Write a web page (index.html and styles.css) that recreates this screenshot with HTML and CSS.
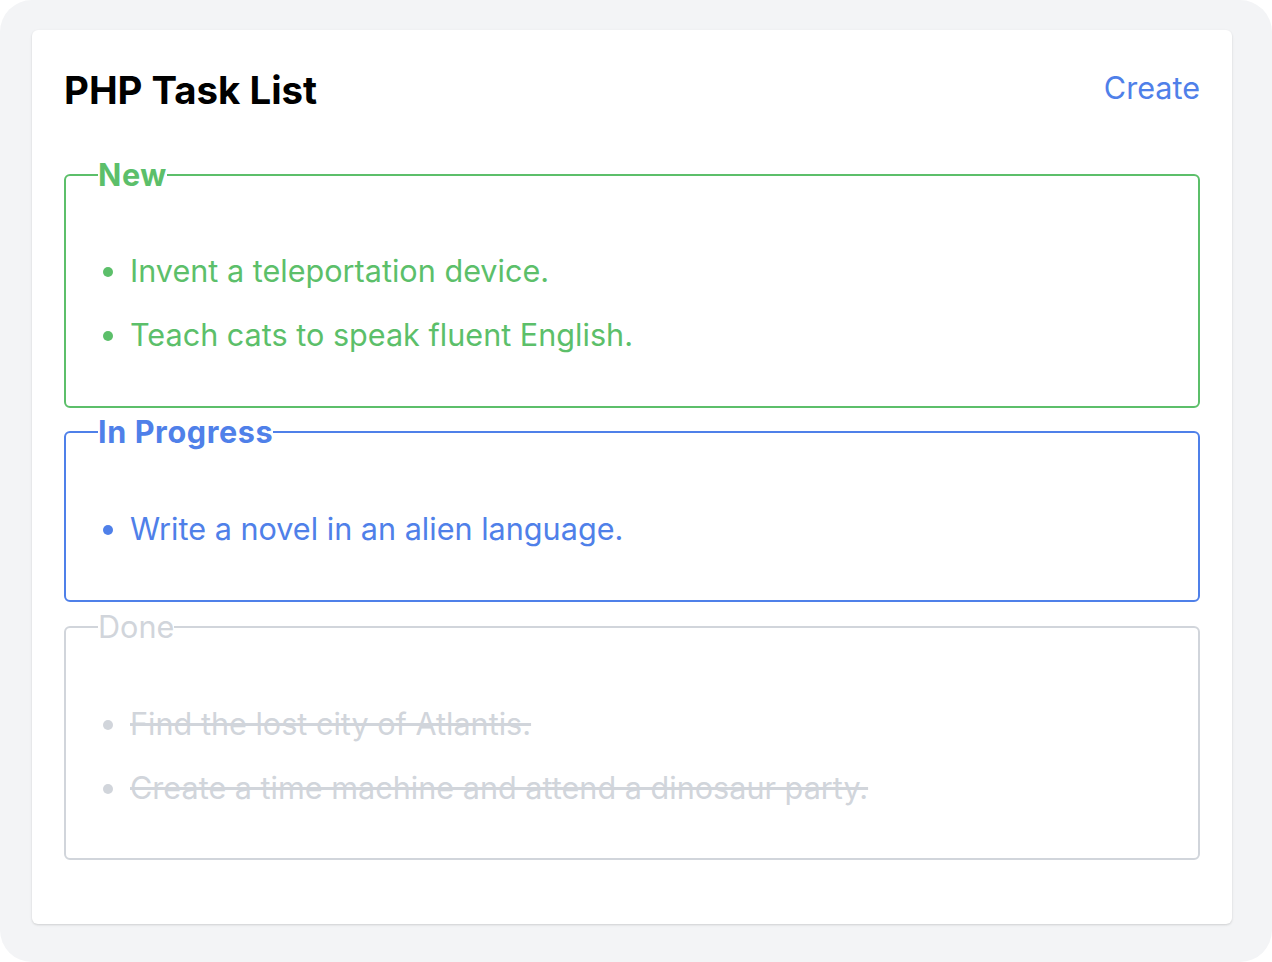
FILE: index.html
```html
<!DOCTYPE html>
<html lang="en">
<head>
<meta charset="utf-8">
<title>PHP Task List</title>
<link rel="stylesheet" href="styles.css">
</head>
<body>
<div class="frame">
  <main class="card">
    <header class="header">
      <h1 class="title">PHP Task List</h1>
      <a class="create" href="#">Create</a>
    </header>
    <fieldset class="group group-new">
      <legend class="group-label">New</legend>
      <ul class="tasks">
        <li class="task">Invent a teleportation device.</li>
        <li class="task">Teach cats to speak fluent English.</li>
      </ul>
    </fieldset>
    <fieldset class="group group-progress">
      <legend class="group-label">In Progress</legend>
      <ul class="tasks">
        <li class="task">Write a novel in an alien language.</li>
      </ul>
    </fieldset>
    <fieldset class="group group-done">
      <legend class="group-label">Done</legend>
      <ul class="tasks">
        <li class="task">Find the lost city of Atlantis.</li>
        <li class="task">Create a time machine and attend a dinosaur party.</li>
      </ul>
    </fieldset>
  </main>
</div>
</body>
</html>
```
FILE: styles.css
```css
* { box-sizing: border-box; }

html, body {
  margin: 0;
  padding: 0;
  background: #ffffff;
}

body {
  font-family: Inter, "Noto Sans", "Liberation Sans", sans-serif;
}

.frame {
  height: 962px;
  background: #f3f4f6;
  border-radius: 32px;
  padding: 30px 40px 38px 32px;
}

.card {
  background: #ffffff;
  border-radius: 6px;
  box-shadow: 0 1px 3px rgba(0, 0, 0, 0.1), 0 1px 2px rgba(0, 0, 0, 0.06);
  padding: 36px 32px 64px;
  display: flex;
  flex-direction: column;
  gap: 6px;
}

.header {
  display: flex;
  justify-content: space-between;
  align-items: center;
  margin-bottom: 37px;
}

.title {
  margin: 0;
  font-size: 38.4px;
  line-height: 48px;
  font-weight: 700;
  color: #000000;
}

.create {
  font-size: 30.6px;
  line-height: 36px;
  color: #4f80e9;
  text-decoration: none;
  margin-top: -5px;
}

.group {
  margin: 0;
  border: 2px solid;
  border-radius: 6px;
  padding: 58px 32px 51px;
  min-width: 0;
}

.group-label {
  padding: 0;
  font-size: 30.6px;
  line-height: 36px;
  font-weight: 700;
  letter-spacing: 0.6px;
}

.tasks {
  margin: 0;
  padding: 0 0 0 32px;
}

.task {
  font-size: 30.6px;
  line-height: 40px;
}

.task + .task {
  margin-top: 24px;
}

.group-new {
  border-color: #5cbf6a;
  color: #5cbf6a;
}

.group-progress {
  border-color: #4f80e9;
  color: #4f80e9;
  padding-top: 59px;
}

.group-done {
  border-color: #d1d5db;
  color: #d1d5db;
  margin-top: 1px;
  padding-top: 59px;
  padding-bottom: 50px;
}

.group-done .group-label {
  font-weight: 400;
  letter-spacing: 0;
}

.group-done .task {
  text-decoration: line-through;
}
```
